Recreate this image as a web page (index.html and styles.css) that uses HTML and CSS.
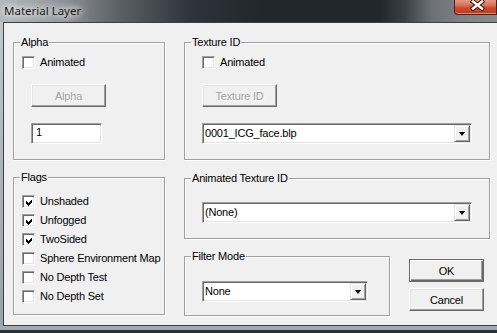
FILE: index.html
```html
<!DOCTYPE html>
<html lang="en">

<head>
    <meta charset="UTF-8">
    <meta name="viewport" content="width=device-width, initial-scale=1.0">
    <title>Material Layer</title>
    <link rel="stylesheet" href="styles.css">
</head>

<body>
    <div class="window">
        <div class="titlebar">
            <span class="title">Material Layer</span>
            <div class="close">
                <svg width="43" height="15" viewBox="0 0 43 15">
                    <path d="M19 1.5 L28 8.5 M28 1.5 L19 8.5" stroke="#4a1810" stroke-width="4.6" stroke-linecap="square" fill="none" />
                    <path d="M19 1.5 L28 8.5 M28 1.5 L19 8.5" stroke="#fff" stroke-width="2.4" stroke-linecap="square" fill="none" />
                </svg>
            </div>
        </div>

        <div class="client">
            <div class="col left">
                <div class="group alpha">
                    <span class="group-title">Alpha</span>
                    <label class="check"><span class="box"></span>Animated</label>
                    <button class="btn" disabled>Alpha</button>
                    <div class="edit">1</div>
                </div>

                <div class="group flags">
                    <span class="group-title">Flags</span>
                    <label class="check"><span class="box checked"><svg width="7" height="7" viewBox="0 0 7 7"><polygon points="0,2 2,4 6,0 6,3 2,7 0,5" /></svg></span>Unshaded</label>
                    <label class="check"><span class="box checked"><svg width="7" height="7" viewBox="0 0 7 7"><polygon points="0,2 2,4 6,0 6,3 2,7 0,5" /></svg></span>Unfogged</label>
                    <label class="check"><span class="box checked"><svg width="7" height="7" viewBox="0 0 7 7"><polygon points="0,2 2,4 6,0 6,3 2,7 0,5" /></svg></span>TwoSided</label>
                    <label class="check"><span class="box"></span>Sphere Environment Map</label>
                    <label class="check"><span class="box"></span>No Depth Test</label>
                    <label class="check"><span class="box"></span>No Depth Set</label>
                </div>
            </div>

            <div class="col right">
                <div class="group texture">
                    <span class="group-title">Texture ID</span>
                    <label class="check"><span class="box"></span>Animated</label>
                    <button class="btn" disabled>Texture ID</button>
                    <div class="combo wide">
                        <span class="combo-text">0001_ICG_face.blp</span>
                        <span class="drop"><span class="arrow"></span></span>
                    </div>
                </div>

                <div class="group anim-texture">
                    <span class="group-title">Animated Texture ID</span>
                    <div class="combo wide">
                        <span class="combo-text">(None)</span>
                        <span class="drop"><span class="arrow"></span></span>
                    </div>
                </div>

                <div class="bottom-row">
                    <div class="group filter">
                        <span class="group-title">Filter Mode</span>
                        <div class="combo narrow">
                            <span class="combo-text">None</span>
                            <span class="drop"><span class="arrow"></span></span>
                        </div>
                    </div>
                    <div class="actions">
                        <button class="btn default">OK</button>
                        <button class="btn">Cancel</button>
                    </div>
                </div>
            </div>
        </div>

        <div class="frame-bottom"></div>
    </div>
</body>

</html>
```

FILE: styles.css
```css
* {
    margin: 0;
    padding: 0;
    box-sizing: border-box;
}

body {
    background-color: #1e2329;
    overflow: hidden;
    font-family: "Liberation Sans", Arial, sans-serif;
    font-size: 11px;
    letter-spacing: -0.2px;
    color: #000;
}

.window {
    display: flex;
    flex-direction: column;
    width: 497px;
    height: 333px;
    overflow: hidden;
    background: linear-gradient(180deg, #c6c9cc 0, #a9b0b6 60%, #98a1a8 100%);
}

/* title bar */

.titlebar {
    display: flex;
    align-items: flex-start;
    height: 22px;
    flex-shrink: 0;
    background: linear-gradient(90deg, #b3b6b9 0, #979b9f 50px, #5b6067 120px, #2e343b 190px, #22272e 260px, #22272e 380px, #3b4047 405px, #6c7177 432px, #81858a 470px, #85898e 497px);
}

.title {
    padding: 4px 0 0 4px;
    font-family: "Noto Sans", "Open Sans", sans-serif;
    font-size: 11.5px;
    line-height: 14px;
    letter-spacing: 0;
    color: #1a1a1a;
    text-shadow: 0 0 6px #fff, 0 0 10px #fff, 0 0 16px rgba(255, 255, 255, 0.9);
}

.close {
    margin-left: auto;
    width: 43px;
    height: 15px;
    flex-shrink: 0;
    border: 1px solid #4e1f16;
    border-top: none;
    border-radius: 0 0 0 4px;
    background: linear-gradient(180deg, #e49a84 0, #d8765c 35%, #c84a2c 60%, #c0391c 100%);
    box-shadow: inset 0 -1px 0 #e08a70;
}

.close svg {
    display: block;
    margin-left: -1px;
}

/* client area */

.client {
    display: flex;
    gap: 19px;
    height: 304px;
    flex-shrink: 0;
    margin-left: 3px;
    padding: 19px 0 0 9px;
    background-color: #f0f0f0;
    border-top: 1px solid #3b4046;
    border-left: 1px solid #3b4046;
    border-bottom: 1px solid #3b4046;
}

.frame-bottom {
    flex: 1;
    background: linear-gradient(180deg, #a3abb1 0, #a3abb1 50%, #2c3137 51%, #2c3137 100%);
}

.col {
    display: flex;
    flex-direction: column;
}

.col.left {
    width: 152px;
}

.col.right {
    width: 306px;
}

/* group boxes */

.group {
    position: relative;
    display: flex;
    flex-direction: column;
    align-items: flex-start;
    border: 1px solid #a0a0a0;
    box-shadow: inset 1px 1px 0 #fff, 1px 1px 0 #fff;
}

.group-title {
    position: absolute;
    top: -7px;
    left: 6px;
    padding: 0 1px;
    line-height: 13px;
    background-color: #f0f0f0;
}

.alpha {
    height: 118px;
    padding: 13px 0 0 8px;
}

.flags {
    height: 138px;
    margin-top: 17px;
    padding: 17px 0 0 8px;
    gap: 6px;
}

.texture {
    height: 118px;
    padding: 13px 0 0 17px;
}

.anim-texture {
    height: 61px;
    margin-top: 18px;
    padding: 23px 0 0 17px;
}

.bottom-row {
    display: flex;
    margin-top: 17px;
}

.filter {
    width: 206px;
    height: 60px;
    padding: 24px 0 0 17px;
}

.actions {
    display: flex;
    flex-direction: column;
    gap: 6px;
    margin: 3px 0 0 19px;
}

/* checkboxes */

.check {
    display: flex;
    align-items: center;
    height: 13px;
    line-height: 13px;
    white-space: nowrap;
}

.box {
    display: flex;
    align-items: center;
    justify-content: center;
    width: 13px;
    height: 13px;
    margin-right: 5px;
    background-color: #fff;
    border: 1px solid;
    border-color: #a0a0a0 #fff #fff #a0a0a0;
    box-shadow: inset 1px 1px 0 #696969, inset -1px -1px 0 #e3e3e3;
}

.box svg {
    display: block;
    margin: 1px 0 0 1px;
    shape-rendering: crispEdges;
}

/* buttons */

.btn {
    width: 75px;
    height: 23px;
    font-family: inherit;
    font-size: 11px;
    letter-spacing: -0.2px;
    color: #000;
    background-color: #f0f0f0;
    border: 1px solid;
    border-color: #fff #696969 #696969 #fff;
    box-shadow: inset -1px -1px 0 #a0a0a0, inset 1px 1px 0 #e3e3e3;
}

.btn:disabled {
    color: #a0a0a0;
    text-shadow: 1px 1px 0 #fff;
}

.alpha .btn {
    margin: 15px 0 0 9px;
}

.texture .btn {
    margin-top: 15px;
}

.btn.default {
    border: 1px solid #696969;
    box-shadow: inset 1px 1px 0 #fff, inset -1px -1px 0 #696969, inset -2px -2px 0 #a0a0a0;
}

/* edit + combo */

.edit {
    width: 71px;
    height: 21px;
    margin: 16px 0 0 9px;
    padding-left: 4px;
    line-height: 17px;
    background-color: #fff;
    border: 1px solid;
    border-color: #a0a0a0 #fff #fff #a0a0a0;
    box-shadow: inset 1px 1px 0 #696969, inset -1px -1px 0 #e3e3e3;
}

.combo {
    display: flex;
    height: 21px;
    background-color: #fff;
    border: 1px solid;
    border-color: #a0a0a0 #fff #fff #a0a0a0;
    box-shadow: inset 1px 1px 0 #696969, inset -1px -1px 0 #e3e3e3;
    padding: 1px;
}

.combo.wide {
    width: 270px;
}

.texture .combo {
    margin-top: 16px;
}

.combo.narrow {
    width: 166px;
}

.combo-text {
    flex: 1;
    padding-left: 1px;
    line-height: 17px;
}

.drop {
    display: flex;
    align-items: center;
    justify-content: center;
    width: 16px;
    height: 17px;
    background-color: #f0f0f0;
    border: 1px solid;
    border-color: #e3e3e3 #696969 #696969 #e3e3e3;
    box-shadow: inset 1px 1px 0 #fff, inset -1px -1px 0 #a0a0a0;
}

.arrow {
    width: 0;
    height: 0;
    margin-top: 1px;
    border-left: 3.5px solid transparent;
    border-right: 3.5px solid transparent;
    border-top: 4px solid #000;
}
```
